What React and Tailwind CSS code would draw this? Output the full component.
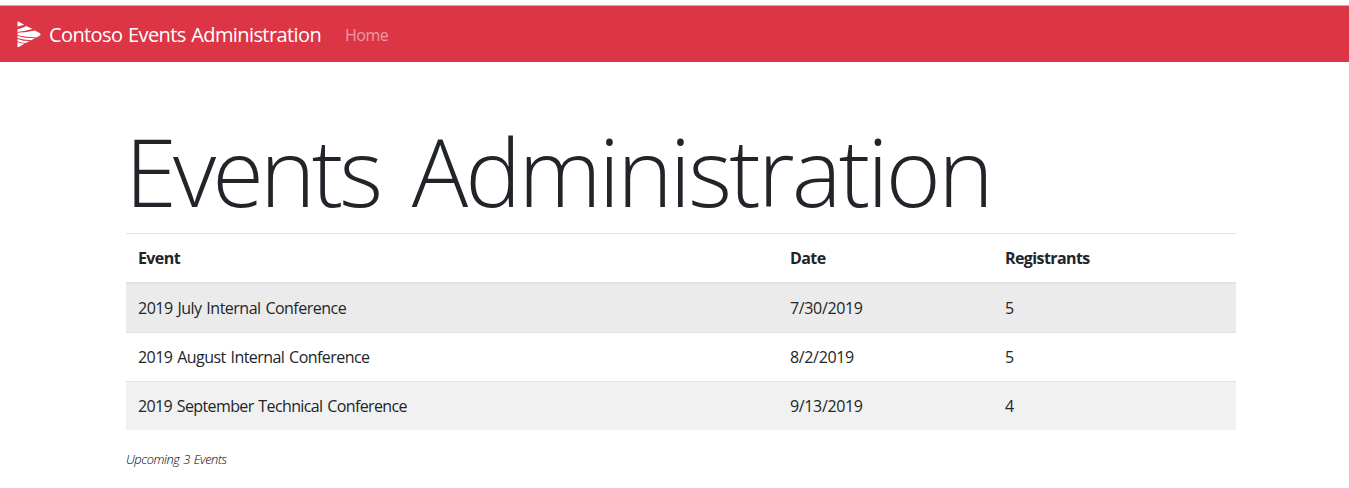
const events = [
  { name: "2019 July Internal Conference", date: "7/30/2019", registrants: 5, bg: "bg-[#ebebeb]", line: "", tracking: "tracking-[-0.51px]" },
  { name: "2019 August Internal Conference", date: "8/2/2019", registrants: 5, bg: "bg-white", line: "border-t", tracking: "tracking-[-0.55px]" },
  { name: "2019 September Technical Conference", date: "9/13/2019", registrants: 4, bg: "bg-[#f1f1f1]", line: "border-t", tracking: "tracking-[-0.62px]" },
];

function Logo() {
  return (
    <svg className="mt-px h-[28px] w-[25px] shrink-0" viewBox="0 0 25 28" fill="#fff" aria-hidden="true">
      <path d="M1.5 1Q1.5 .3 2.4.6L8.2 3.7Q4.8 5 1.5 5.5Z" />
      <path d="M1.5 8.3Q6 7.2 10.3 4.9L16.6 8.1Q9 10.4 1.5 10.9Z" />
      <path d="M1.5 11.8Q11 11.5 18.8 9.6Q24.6 12.3 24.6 13.6Q24.6 14.8 20.4 16.5Q10 16.3 1.5 14.2Z" />
      <path d="M1.5 14.9Q9 17.1 18.9 17.3L15.4 19.2Q7 18.9 1.5 17.1Z" />
      <path d="M1.5 17.9Q7 20.1 13.6 20.1L10 22Q5 21.6 1.5 20.2Z" />
      <path d="M1.5 21Q4 22.6 8.8 22.6L2.8 26Q1.5 26.6 1.5 25.6Z" />
    </svg>
  );
}

export default function App() {
  return (
    <div className="h-[488px] overflow-hidden bg-white pt-[5px] font-['Open_Sans','Noto_Sans',sans-serif] text-base text-[#212529]">
      <nav className="flex h-[57px] items-center border-t border-[#b5b5b5] bg-[#dc3545] pl-4">
        <Logo />
        <a className="ml-[8px] w-[272px] whitespace-nowrap pt-[2px] text-[20px] leading-[30px] tracking-[-0.6px] text-white [word-spacing:1px]">Contoso Events Administration</a>
        <a className="ml-[24px] whitespace-nowrap pt-px leading-6 tracking-[-0.5px] text-white/50">Home</a>
      </nav>
      <main className="ml-[126px] w-[1110px] pt-[48px]">
        <h1 className="-ml-px h-[123px] whitespace-nowrap text-[94px] font-light leading-[123px] tracking-[-2.8px]"><span className="tracking-[-3.9px]">Events</span><span className="[word-spacing:11px]"> Administration</span></h1>
        <table className="w-full table-fixed border-separate border-spacing-0 text-left">
          <colgroup>
            <col className="w-[652px]" />
            <col className="w-[215px]" />
            <col className="w-[243px]" />
          </colgroup>
          <thead>
            <tr className="h-[51px] font-bold tracking-[-0.6px]">
              <th className="border-t border-b-2 border-[#dee2e6] px-3 py-0">Event</th>
              <th className="border-t border-b-2 border-[#dee2e6] px-3 py-0">Date</th>
              <th className="border-t border-b-2 border-[#dee2e6] px-3 py-0">Registrants</th>
            </tr>
          </thead>
          <tbody>
            {events.map((e) => (
              <tr key={e.name} className={`${e.bg} ${e.line ? "h-[49px]" : "h-[48px]"}`}>
                <td className={`${e.line} ${e.tracking} border-[#dee2e6] px-3 py-0 [word-spacing:1.2px]`}>{e.name}</td>
                <td className={`${e.line} border-[#dee2e6] px-3 py-0 tracking-[-0.35px]`}>{e.date}</td>
                <td className={`${e.line} border-[#dee2e6] px-3 py-0`}>{e.registrants}</td>
              </tr>
            ))}
          </tbody>
        </table>
        <p className="mt-[19px] text-[12.8px] font-light italic leading-5 tracking-[-0.42px] text-black [word-spacing:1px]">Upcoming 3 Events</p>
      </main>
    </div>
  );
}
